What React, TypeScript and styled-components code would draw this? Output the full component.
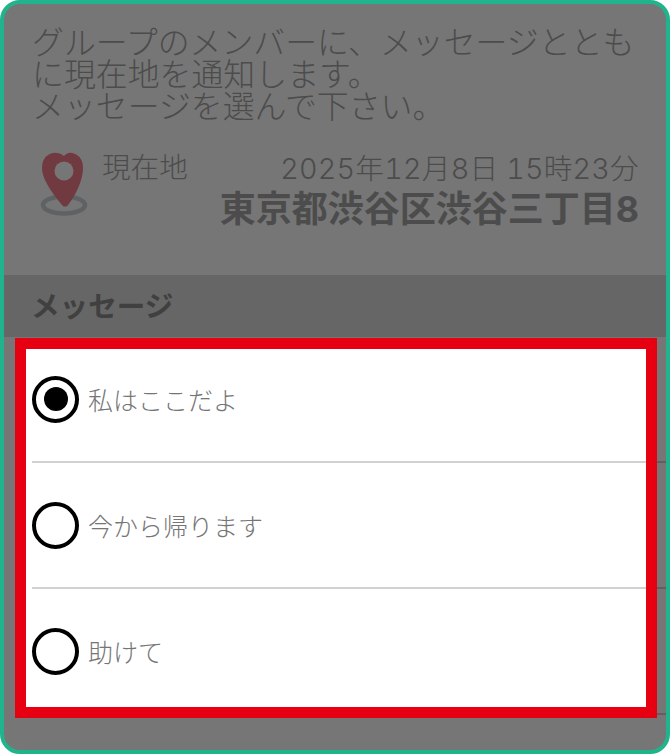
import React, { useState } from 'react';
import styled, { createGlobalStyle } from 'styled-components';

const GlobalStyle = createGlobalStyle`
  html, body {
    margin: 0;
    padding: 0;
    background: #ffffff;
  }
  *, *::before, *::after {
    box-sizing: border-box;
  }
`;

const Frame = styled.div`
  width: 670px;
  height: 754px;
  border: 4px solid #20b48c;
  border-radius: 20px;
  background: #767676;
  overflow: hidden;
  font-family: Inter, "Noto Sans CJK JP", "Noto Sans", sans-serif;
  font-weight: 300;
  color: #4c4c4c;
`;

const Intro = styled.p`
  margin: 0;
  padding: 23px 0 0 28px;
  width: 640px;
  font-size: 31.9px;
  line-height: 32px;
`;

const LocationRow = styled.div`
  display: flex;
  height: 128px;
  margin-top: 24px;
  padding: 0 27px 0 36px;
`;

const Pin = styled.svg`
  flex: none;
  width: 48px;
  height: 64px;
  margin-top: 5px;
`;

const PlaceLabel = styled.div`
  flex: none;
  margin: 1px 0 0 14px;
  font-size: 28.6px;
  line-height: 40px;
`;

const PlaceDetail = styled.div`
  flex: 1;
  padding-top: 1px;
  text-align: right;
`;

const Timestamp = styled.div`
  font-size: 28.7px;
  line-height: 42px;
  letter-spacing: 0.2px;
  font-variant-numeric: tabular-nums;
`;

const Address = styled.div`
  margin-top: -1px;
  font-size: 36px;
  line-height: 40px;
  font-weight: 700;
  font-variant-numeric: tabular-nums;
`;

const SectionHeader = styled.div`
  height: 62px;
  padding-left: 27px;
  background: #666666;
  font-size: 28.6px;
  font-weight: 700;
  line-height: 64px;
  color: #404040;
`;

// white cut-out and its red outline sit over the dimmed list
const MessageList = styled.div`
  position: relative;

  &::before,
  &::after {
    content: '';
    position: absolute;
    top: 1px;
    left: 11px;
    width: 642px;
    height: 380px;
  }

  &::before {
    background: #ffffff;
  }

  &::after {
    border: 11px solid #e60012;
    pointer-events: none;
  }
`;

const Option = styled.label`
  position: relative;
  display: flex;
  align-items: center;
  height: 126px;
  margin-left: 28px;
  border-bottom: 2px solid rgba(0, 0, 0, 0.18);
  cursor: pointer;
`;

const Radio = styled.span<{ $checked: boolean }>`
  flex: none;
  display: flex;
  align-items: center;
  justify-content: center;
  width: 47px;
  height: 47px;
  border: 4.5px solid #000000;
  border-radius: 50%;
  background: #ffffff;

  &::after {
    content: '';
    display: ${p => (p.$checked ? 'block' : 'none')};
    width: 24px;
    height: 24px;
    border-radius: 50%;
    background: #000000;
  }
`;

const OptionText = styled.span`
  margin-left: 9px;
  font-size: 25px;
  color: #757575;
`;

const messages = ['私はここだよ', '今から帰ります', '助けて'];

export default function App() {
  const [selected, setSelected] = useState(0);

  return (
    <>
      <GlobalStyle />
      <Frame>
        <Intro>
          グループのメンバーに、メッセージととも
          <br />
          に現在地を通知します。
          <br />
          メッセージを選んで下さい。
        </Intro>
        <LocationRow>
          <Pin viewBox="0 0 48 64">
            <ellipse cx="24" cy="53" rx="21" ry="8.5" fill="none" stroke="#5f6265" strokeWidth="4.5" />
            <path
              d="M23 4 C19 1 14 0 10 1.5 C4 3.5 1 9 1 16 C1 28 13 43 21 53 C22.5 55 25.5 55 27 53 C35 43 42 28 42 16 C42 9 39 3.5 33 1.5 C29 0 26 1 23 4 Z"
              transform="translate(1 0)"
              fill="#703a40"
            />
            <circle cx="24" cy="19" r="9.5" fill="#767676" />
          </Pin>
          <PlaceLabel>現在地</PlaceLabel>
          <PlaceDetail>
            <Timestamp>2025年12月8日 15時23分</Timestamp>
            <Address>東京都渋谷区渋谷三丁目8</Address>
          </PlaceDetail>
        </LocationRow>
        <SectionHeader>メッセージ</SectionHeader>
        <MessageList>
          {messages.map((text, i) => (
            <Option key={text} onClick={() => setSelected(i)}>
              <Radio $checked={selected === i} />
              <OptionText>{text}</OptionText>
            </Option>
          ))}
        </MessageList>
      </Frame>
    </>
  );
}
